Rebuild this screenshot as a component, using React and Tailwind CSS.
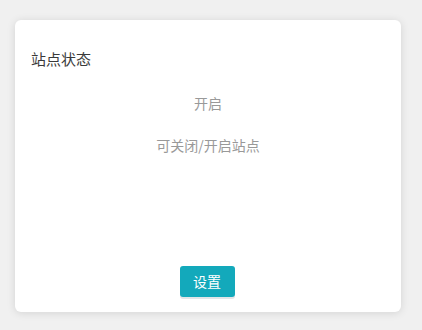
export default function App() {
  return (
    <div
      className="w-[422px] h-[330px] bg-[#f0f0f0] pt-[20px] pl-[15px]"
      style={{ fontFamily: '"Noto Sans CJK SC", "Noto Sans", sans-serif' }}
    >
      <div className="w-[386px] h-[292px] bg-white rounded-[6px] shadow-[0_1px_8px_rgba(0,0,0,0.12)] flex flex-col pt-[29px] pb-[15px]">
        {/* Header */}
        <h3 className="pl-[16px] text-[15px] leading-[20px] text-[#3a3a3a]">站点状态</h3>

        {/* Status */}
        <p className="mt-[24px] text-center text-[14px] leading-[20px] text-[#999]">开启</p>
        <p className="mt-[22px] text-center text-[14px] leading-[20px] text-[#999]">可关闭/开启站点</p>

        {/* Action */}
        <div className="mt-auto flex justify-center">
          <button className="w-[55px] h-[31px] bg-[#13a9bb] text-white text-[14px] rounded-[3px] shadow-[0_2px_0_#e2e6e8] -translate-x-[1px]">
            设置
          </button>
        </div>
      </div>
    </div>
  );
}
